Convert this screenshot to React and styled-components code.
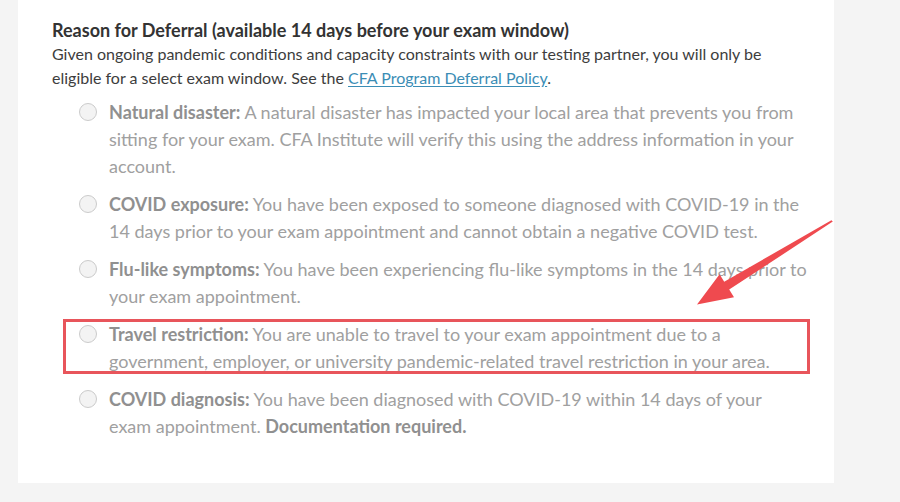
import React from "react";
import styled, { createGlobalStyle } from "styled-components";

const Global = createGlobalStyle`
  html, body { margin: 0; padding: 0; background: #f4f4f4; }
  body { font-family: Lato, "Open Sans", sans-serif; }
`;

const Page = styled.div`
  width: 900px;
  height: 502px;
  overflow: hidden;
  background: #f4f4f4;
`;

const Card = styled.section`
  position: relative;
  margin-left: 18px;
  width: 816px;
  box-sizing: border-box;
  padding: 18px 0 40px 34px;
  background: #fff;
  height: 483px;
`;

const Title = styled.h2`
  margin: 0;
  font-size: 18px;
  line-height: 24px;
  font-weight: 700;
  color: #333;
  white-space: nowrap;
`;

const Desc = styled.p`
  margin: 0;
  font-size: 16px;
  line-height: 24px;
  color: #3d3d3d;
  white-space: nowrap;
`;

const Link = styled.a`
  color: #3b8db5;
  text-decoration: underline;
  text-underline-offset: 2px;
`;

const Options = styled.ul`
  list-style: none;
  margin: 9px 0 0 27px;
  padding: 0;
  display: flex;
  flex-direction: column;
  gap: 11px;
`;

const Option = styled.li`
  position: relative;
  display: flex;
  align-items: flex-start;
  gap: 12px;
`;

const Radio = styled.span`
  flex: none;
  width: 18px;
  height: 18px;
  margin-top: 4px;
  box-sizing: border-box;
  border-radius: 50%;
  border: 1.5px solid #cbcbcb;
  background: #f3f3f3;
`;

const OptionText = styled.div`
  font-size: 18px;
  line-height: 27px;
  color: #a0a0a0;
  white-space: nowrap;
`;

const Strong = styled.b`
  font-weight: 700;
  color: #909090;
`;

const Highlight = styled.div`
  position: absolute;
  left: -16px;
  top: -2px;
  width: 747px;
  height: 55px;
  box-sizing: border-box;
  border: 3px solid #e8555b;
  pointer-events: none;
`;

const Arrow = styled.svg`
  position: absolute;
  left: -18px;
  top: 0;
  pointer-events: none;
`;

const items = [
  {
    label: "Natural disaster:",
    lines: [
      "A natural disaster has impacted your local area that prevents you from",
      "sitting for your exam. CFA Institute will verify this using the address information in your",
      "account.",
    ],
  },
  {
    label: "COVID exposure:",
    lines: [
      "You have been exposed to someone diagnosed with COVID-19 in the",
      "14 days prior to your exam appointment and cannot obtain a negative COVID test.",
    ],
  },
  {
    label: "Flu-like symptoms:",
    lines: [
      "You have been experiencing flu-like symptoms in the 14 days prior to",
      "your exam appointment.",
    ],
  },
  {
    label: "Travel restriction:",
    highlight: true,
    lines: [
      "You are unable to travel to your exam appointment due to a",
      "government, employer, or university pandemic-related travel restriction in your area.",
    ],
  },
  {
    label: "COVID diagnosis:",
    lines: [
      "You have been diagnosed with COVID-19 within 14 days of your",
      "exam appointment.",
    ],
    tail: "Documentation required.",
  },
];

export default function App() {
  return (
    <Page>
      <Global />
      <Card>
        <Title>Reason for Deferral (available 14 days before your exam window)</Title>
        <Desc>
          Given ongoing pandemic conditions and capacity constraints with our testing partner, you will only be
          <br />
          eligible for a select exam window. See the <Link>CFA Program Deferral Policy</Link>.
        </Desc>
        <Options>
          {items.map((it) => (
            <Option key={it.label}>
              <Radio />
              <OptionText>
                <Strong>{it.label}</Strong>{" "}
                {it.lines.map((l, i) => (
                  <React.Fragment key={i}>
                    {i > 0 && <br />}
                    {l}
                  </React.Fragment>
                ))}
                {it.tail && (
                  <>
                    {" "}
                    <Strong>{it.tail}</Strong>
                  </>
                )}
              </OptionText>
              {it.highlight && <Highlight />}
            </Option>
          ))}
        </Options>
        <Arrow width="900" height="502" viewBox="0 0 900 502">
          <path
            d="M832.8 221.6 L831.4 220.2 L724.2 281.8 L719.6 274.2 L697 304.5 L734 297.2 L729.2 289.6 Z"
            fill="#ef4a4f"
          />
        </Arrow>
      </Card>
    </Page>
  );
}
